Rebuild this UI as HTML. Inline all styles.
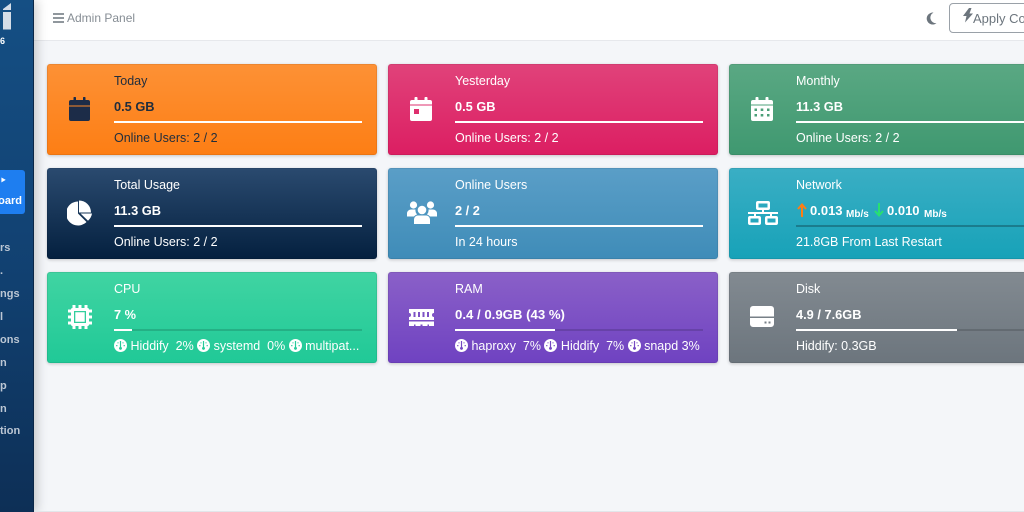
<!DOCTYPE html>
<html><head><meta charset="utf-8">
<style>
*{box-sizing:border-box}
html,body{margin:0;padding:0;width:1024px;height:512px;overflow:hidden;background:#f4f6f9;font-family:"Liberation Sans",sans-serif}
#w{position:absolute;left:0;top:0;width:1024px;height:512px;overflow:hidden;filter:blur(.3px)}
.abs{position:absolute;white-space:nowrap}
#top{position:absolute;left:34px;top:0;width:990px;height:41px;background:#fff;border-bottom:1px solid #e6e8ec}
#side{position:absolute;left:0;top:0;width:34px;height:512px;background:linear-gradient(180deg,#154f84 0%,#114070 55%,#0d2f56 100%);box-shadow:3px 0 11px rgba(0,0,0,.2);border-right:1px solid #0b2747}
.n{position:absolute;left:0;color:#bcc7d4;font-size:11px;font-weight:bold;white-space:nowrap}
.card{position:absolute;width:329.5px;height:91px;border-radius:3px;color:#fff;box-shadow:0 1px 3px rgba(0,0,0,.2),inset 0 0 0 1px rgba(0,0,0,.07);overflow:hidden}
.card svg.ic{position:absolute;fill:#fff}
.t{position:absolute;left:67px;font-size:12.5px;white-space:nowrap}
.tt{top:10px}
.v{top:34.500px;font-weight:bold;font-size:12.8px}
.f{top:67px}
.bar{position:absolute;left:67px;top:57px;width:248px;height:2px;background:rgba(0,0,0,.14)}
.bar i{display:block;height:2px;background:#fff}
.f svg{width:13px;height:13px;vertical-align:-2px}
small{font-size:10px}
.m{position:absolute;top:34.500px;font-weight:bold;font-size:13px;white-space:nowrap}
.m small{font-weight:bold}
</style></head><body><div id="w">
<div id="top"></div>
<div id="side"></div>
<svg class="abs" style="left:0;top:0" width="12" height="34" viewBox="0 0 12 34"><path d="M3 9 11 3V10H3ZM3 12H11V29.500H3Z" fill="#d5dde7"/></svg>
<div class="abs" style="left:0;top:36px;font-size:9px;font-weight:bold;color:#fff">6</div>
<div class="abs" style="left:0;top:170px;width:25px;height:44px;background:#1e7ef0;border-radius:0 3px 3px 0"></div>
<div class="n" style="top:174px;color:#fff">&#8227;</div>
<div class="abs" style="left:-6px;top:195px;width:28px;text-align:right;color:#fff;font-size:11px;font-weight:bold;overflow:hidden">oard</div>
<div class="n" style="top:242px">rs</div>
<div class="n" style="top:265px">.</div>
<div class="n" style="top:288px">ngs</div>
<div class="n" style="top:311px">l</div>
<div class="n" style="top:334px">ons</div>
<div class="n" style="top:357px">n</div>
<div class="n" style="top:380px">p</div>
<div class="n" style="top:403px">n</div>
<div class="n" style="top:425px">tion</div>

<svg class="abs" style="left:53px;top:13px" width="11" height="10" viewBox="0 0 11 10"><path d="M0 1H11M0 5H11M0 9H11" stroke="#6c757d" stroke-width="1.6"/></svg>
<div class="abs" style="left:67px;top:11px;font-size:12px;color:#868d94">Admin Panel</div>
<svg class="abs" style="left:926px;top:12px" width="11" height="13" viewBox="0 0 11 13"><path d="M7.500 .6A6 6 0 1 0 10.500 11.200 5.600 5.600 0 0 1 7.500 .6Z" fill="#6c757d"/></svg>
<div class="abs" style="left:949px;top:3px;width:90px;height:30px;border:1px solid #9aa1a8;border-radius:4px"></div>
<svg class="abs" style="left:962px;top:8px" width="12" height="15" viewBox="0 0 12 15"><path d="M7 0 1 8H4.500L3 14.500 11 5.500H7.500L9.500 0Z" fill="#6c757d"/></svg>
<div class="abs" style="left:973px;top:11px;font-size:13px;color:#6c757d">Apply Co</div>

<div class="card" style="left:47px;top:64px;background:linear-gradient(180deg,#fd9135,#fd7e14)"><svg class="ic" style="left:22px;top:33px;fill:#1c2c48" width="21" height="24" viewBox="0 0 21 24"><path d="M4.500 1A1.200 1.200 0 0 1 7 1V3H14V1A1.200 1.200 0 0 1 16.500 1V3H19A2 2 0 0 1 21 5V8.500H0V5A2 2 0 0 1 2 3H4.500ZM0 9.500H21V22A2 2 0 0 1 19 24H2A2 2 0 0 1 0 22Z"/></svg>
<div class="t tt" style="color:#1f2d3d">Today</div><div class="t v" style="color:#1f2d3d">0.5 GB</div><div class="bar" style="background:#fff"></div><div class="t f" style="color:#1f2d3d">Online Users: 2 / 2</div></div>

<div class="card" style="left:388px;top:64px;background:linear-gradient(180deg,#e0427a,#dc1e62)"><svg class="ic" style="left:22px;top:33px" width="22" height="24" viewBox="0 0 22 24"><path fill-rule="evenodd" d="M4.500 1.200A1.300 1.300 0 0 1 7.500 1.200V3H14.500V1.200A1.300 1.300 0 0 1 17.500 1.200V3H20A2 2 0 0 1 22 5V7.500H0V5A2 2 0 0 1 2 3H4.500ZM0 8.500H22V22A2 2 0 0 1 20 24H2A2 2 0 0 1 0 22ZM4 12V17H9V12Z"/></svg>
<div class="t tt">Yesterday</div><div class="t v">0.5 GB</div><div class="bar" style="background:#fff"></div><div class="t f">Online Users: 2 / 2</div></div>

<div class="card" style="left:729px;top:64px;background:linear-gradient(180deg,#5aa883,#3f9870)"><svg class="ic" style="left:22px;top:33px" width="22" height="24" viewBox="0 0 22 24"><path fill-rule="evenodd" d="M4.500 1.200A1.300 1.300 0 0 1 7.500 1.200V3H14.500V1.200A1.300 1.300 0 0 1 17.500 1.200V3H20A2 2 0 0 1 22 5V7.500H0V5A2 2 0 0 1 2 3H4.500ZM0 8.500H22V22A2 2 0 0 1 20 24H2A2 2 0 0 1 0 22ZM3.500 11.500V14H6V11.500ZM9.700 11.500V14H12.300V11.500ZM16 11.500V14H18.500V11.500ZM3.500 17V19.500H6V17ZM9.700 17V19.500H12.300V17ZM16 17V19.500H18.500V17Z"/></svg>
<div class="t tt">Monthly</div><div class="t v">11.3 GB</div><div class="bar" style="background:#fff"></div><div class="t f">Online Users: 2 / 2</div></div>

<div class="card" style="left:47px;top:168px;background:linear-gradient(180deg,#2a4a6f,#04203f)"><svg class="ic" style="left:20px;top:32px" width="26" height="26" viewBox="0 0 26 26"><path d="M11 1.500V13.500L19.500 22A12 12 0 1 1 11 1.500ZM12 .5A12 12 0 0 1 24 12.500H12ZM13.500 13.500H25A12 12 0 0 1 21 20.700Z"/></svg>
<div class="t tt">Total Usage</div><div class="t v">11.3 GB</div><div class="bar" style="background:#fff"></div><div class="t f">Online Users: 2 / 2</div></div>

<div class="card" style="left:388px;top:168px;background:linear-gradient(180deg,#5a9ec7,#3f8cb8)"><svg class="ic" style="left:19px;top:33px" width="30" height="23" viewBox="0 0 30 23"><circle cx="6.500" cy="4" r="3.600"/><circle cx="23.500" cy="4" r="3.600"/><circle cx="15" cy="9" r="4.300"/><path d="M0 15.500V13A4 4 0 0 1 4 8.500H8.500A6 6 0 0 0 10 13.500 7 7 0 0 0 7 15.500ZM21.500 8.500H26A4 4 0 0 1 30 13V15.500H23A7 7 0 0 0 20 13.500 6 6 0 0 0 21.500 8.500ZM10.500 14.500H19.500A4 4 0 0 1 23 18.500V23H7V18.500A4 4 0 0 1 10.500 14.500Z"/></svg>
<div class="t tt">Online Users</div><div class="t v">2 / 2</div><div class="bar" style="background:#fff"></div><div class="t f">In 24 hours</div></div>

<div class="card" style="left:729px;top:168px;background:linear-gradient(180deg,#3aaec4,#17a2b8)"><svg class="ic" style="left:19px;top:33px" width="30" height="24" viewBox="0 0 30 24"><path fill-rule="evenodd" d="M10 0H20A2 2 0 0 1 22 2V7A2 2 0 0 1 20 9H16V11H30V13H24V15H28A2 2 0 0 1 30 17V22A2 2 0 0 1 28 24H19A2 2 0 0 1 17 22V17A2 2 0 0 1 19 15H22V13H8V15H11A2 2 0 0 1 13 17V22A2 2 0 0 1 11 24H2A2 2 0 0 1 0 22V17A2 2 0 0 1 2 15H6V13H0V11H14V9H10A2 2 0 0 1 8 7V2A2 2 0 0 1 10 0ZM10.500 2.500V6.500H19.500V2.500ZM2.500 17.500V21.500H10.500V17.500ZM19.500 17.500V21.500H27.500V17.500Z"/></svg>
<div class="t tt">Network</div>
<svg class="abs" style="left:68px;top:35px" width="10" height="14" viewBox="0 0 10 14"><path d="M5 14V2M1 6 5 1.500 9 6" fill="none" stroke="#fd7e14" stroke-width="2"/></svg>
<div class="m" style="left:81px">0.013</div><div class="m" style="left:117px;top:36.500px"><small>Mb/s</small></div>
<svg class="abs" style="left:145px;top:35px" width="10" height="14" viewBox="0 0 10 14"><path d="M5 0V12M1 8 5 12.500 9 8" fill="none" stroke="#28e070" stroke-width="2"/></svg>
<div class="m" style="left:158px">0.010</div><div class="m" style="left:195px;top:36.500px"><small>Mb/s</small></div>
<div class="bar" style="background:rgba(0,0,0,.25)"></div><div class="t f">21.8GB From Last Restart</div></div>

<div class="card" style="left:47px;top:272px;background:linear-gradient(180deg,#40d4a2,#20c997)"><svg class="ic" style="left:21px;top:33px" width="24" height="24" viewBox="0 0 24 24"><path fill-rule="evenodd" d="M4.500 0H7.500V3H10.500V0H13.500V3H16.500V0H19.500V3A1.500 1.500 0 0 1 21 4.500H24V7.500H21V10.500H24V13.500H21V16.500H24V19.500H21A1.500 1.500 0 0 1 19.500 21V24H16.500V21H13.500V24H10.500V21H7.500V24H4.500V21A1.500 1.500 0 0 1 3 19.500H0V16.500H3V13.500H0V10.500H3V7.500H0V4.500H3A1.500 1.500 0 0 1 4.500 3ZM6 6V18H18V6ZM7.300 7.300H16.700V16.700H7.300Z"/></svg>
<div class="t tt">CPU</div><div class="t v">7 %</div><div class="bar"><i style="width:18px"></i></div>
<div class="t f"><svg viewBox="0 0 13 13"><use href="#g"/></svg> Hiddify&nbsp; 2% <svg viewBox="0 0 13 13"><use href="#g"/></svg> systemd&nbsp; 0% <svg viewBox="0 0 13 13"><use href="#g"/></svg> multipat...</div></div>

<div class="card" style="left:388px;top:272px;background:linear-gradient(180deg,#8a60c8,#6f42c1)"><svg class="ic" style="left:20px;top:37px" width="27" height="17" viewBox="0 0 27 17"><path fill-rule="evenodd" d="M1 0H26V4A2 2 0 0 0 26 8V11H1V8A2 2 0 0 0 1 4ZM5.500 3V8H7.500V3ZM10 3V8H12V3ZM14.500 3V8H16.500V3ZM19 3V8H21V3ZM1 12.500H26V17H21V15.500H19.500V17H14.500V15.500H12.500V17H7.500V15.500H6V17H1Z"/></svg>
<div class="t tt">RAM</div><div class="t v" style="font-size:13.200px">0.4 / 0.9GB (43 %)</div><div class="bar"><i style="width:100px"></i></div>
<div class="t f"><svg viewBox="0 0 13 13"><use href="#g"/></svg> haproxy&nbsp; 7% <svg viewBox="0 0 13 13"><use href="#g"/></svg> Hiddify&nbsp; 7% <svg viewBox="0 0 13 13"><use href="#g"/></svg> snapd 3%</div></div>

<div class="card" style="left:729px;top:272px;background:linear-gradient(180deg,#828a91,#6c757d)"><svg class="ic" style="left:21px;top:34px" width="24" height="21" viewBox="0 0 24 21"><path fill-rule="evenodd" d="M3 0H21A3 3 0 0 1 24 3V10.500H0V3A3 3 0 0 1 3 0ZM0 12H24V18A3 3 0 0 1 21 21H3A3 3 0 0 1 0 18ZM14.500 15.500V17.500H16.500V15.500ZM18.500 15.500V17.500H20.500V15.500Z"/></svg>
<div class="t tt">Disk</div><div class="t v">4.9 / 7.6GB</div><div class="bar"><i style="width:161px"></i></div><div class="t f">Hiddify: 0.3GB</div></div>

<div class="abs" style="left:34px;top:511px;width:990px;height:1px;background:#e2e6ea"></div>
<svg width="0" height="0" style="position:absolute"><defs><g id="g"><path fill="#fff" fill-rule="evenodd" d="M6.500 0A6.500 6.500 0 1 1 6.500 13 6.500 6.500 0 0 1 6.500 0ZM5.900 2V8A1.500 1.500 0 1 0 7.100 8V2ZM2.200 6V7.200H3.400V6ZM9.600 6V7.200H10.800V6ZM3.500 3.200V4.400H4.500V3.200ZM8.500 3.200V4.400H9.500V3.200Z"/></g></defs></svg>
</div></body></html>
